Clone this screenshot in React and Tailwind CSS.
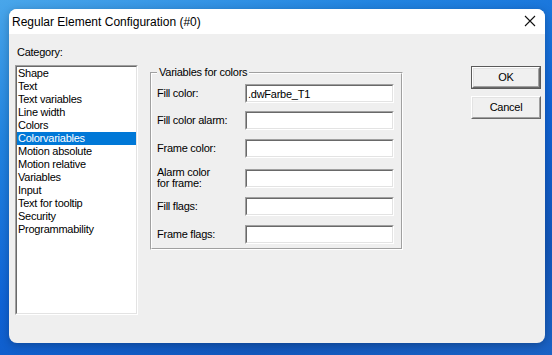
import React from "react";

const items = [
  "Shape",
  "Text",
  "Text variables",
  "Line width",
  "Colors",
  "Colorvariables",
  "Motion absolute",
  "Motion relative",
  "Variables",
  "Input",
  "Text for tooltip",
  "Security",
  "Programmability",
];

const rows = [
  { label: ["Fill color:"], value: ".dwFarbe_T1", mt: "mt-[10px]" },
  { label: ["Fill color alarm:"], value: "", mt: "mt-[8px]" },
  { label: ["Frame color:"], value: "", mt: "mt-[9px]" },
  { label: ["Alarm color", "for frame:"], value: "", mt: "mt-[9px]" },
  { label: ["Fill flags:"], value: "", mt: "mt-[8px]" },
  { label: ["Frame flags:"], value: "", mt: "mt-[9px]" },
];

function Sunken({ className = "", children }) {
  return (
    <div
      className={
        "border border-t-[#a0a0a0] border-l-[#a0a0a0] border-b-white border-r-white " +
        className
      }
    >
      <div className="h-full w-full border border-t-[#696969] border-l-[#696969] border-b-[#e3e3e3] border-r-[#e3e3e3] bg-white">
        {children}
      </div>
    </div>
  );
}

function Button({ children, isDefault }) {
  const inner = (
    <div className="h-full w-full border border-t-white border-l-white border-b-[#696969] border-r-[#696969]">
      <div className="flex h-full w-full items-center justify-center border border-t-[#e3e3e3] border-l-[#e3e3e3] border-b-[#a0a0a0] border-r-[#a0a0a0] bg-[#f0f0f0] text-black">
        {children}
      </div>
    </div>
  );
  return isDefault ? (
    <div className="h-[23px] w-[70px] border border-[#5a5a5a]">{inner}</div>
  ) : (
    <div className="h-[23px] w-[70px]">{inner}</div>
  );
}

export default function App() {
  return (
    <div className="h-[355px] w-[552px] overflow-hidden bg-[linear-gradient(160deg,#49a6ea_0%,#2284e0_25%,#0f63d6_55%,#1257bb_80%,#1a62c4_100%)] pl-[9px] pt-[9px]">
      <div className="flex h-[334px] w-[536px] flex-col overflow-hidden rounded-[8px] bg-[#efefef] shadow-[0_2px_8px_rgba(0,0,0,0.25)]">
        {/* Title bar */}
        <div className="flex h-[25px] items-center justify-between bg-white pl-[3px] pr-[9px]">
          <span className="font-['Liberation_Sans',Arial,sans-serif] text-[12px] leading-none text-black">
            Regular Element Configuration (#0)
          </span>
          <svg width="12" height="12" viewBox="0 0 12 12" className="mt-[-1px]">
            <path d="M1 1 L11 11 M11 1 L1 11" stroke="#111" strokeWidth="1.1" />
          </svg>
        </div>

        {/* Body */}
        <div className="flex flex-1 font-['Liberation_Sans',Arial,sans-serif] text-[11px] leading-[13px] tracking-[-0.25px] text-black">
          {/* Left column */}
          <div className="ml-[6px] mt-[12px] flex flex-col">
            <div className="ml-[2px] h-[13px]">Category:</div>
            <Sunken className="mt-[6px] h-[250px] w-[123px]">
              <div className="flex flex-col">
                {items.map((it) => (
                  <div
                    key={it}
                    className={
                      "h-[13px] pl-[1px] whitespace-nowrap " +
                      (it === "Colorvariables" ? "bg-[#0078d7] text-white" : "")
                    }
                  >
                    {it}
                  </div>
                ))}
              </div>
            </Sunken>
          </div>

          {/* Group box */}
          <div className="ml-[12px] mt-[38px]">
            <div className="relative h-[178px] w-[253px] border border-t-[#a0a0a0] border-l-[#a0a0a0] border-b-white border-r-white">
              <div className="h-full w-full border border-t-white border-l-white border-b-[#a0a0a0] border-r-[#a0a0a0] pl-[5px] pr-[7px]">
                <div className="absolute left-[6px] top-[-7px] bg-[#efefef] px-[2px]">
                  Variables for colors
                </div>
                <div className="flex flex-col">
                  {rows.map((r, i) => (
                    <div key={i} className={"flex items-center " + r.mt}>
                      <div className="w-[88px] leading-[11px]">
                        {r.label.map((l) => (
                          <div key={l}>{l}</div>
                        ))}
                      </div>
                      <Sunken className="h-[19px] w-[149px]">
                        <div className="pl-[1px] pt-[2px] leading-[13px]">{r.value}</div>
                      </Sunken>
                    </div>
                  ))}
                </div>
              </div>
            </div>
          </div>

          {/* Buttons */}
          <div className="ml-[68px] mt-[32px] flex flex-col gap-[7px]">
            <Button isDefault>OK</Button>
            <Button>Cancel</Button>
          </div>
        </div>
      </div>
    </div>
  );
}
